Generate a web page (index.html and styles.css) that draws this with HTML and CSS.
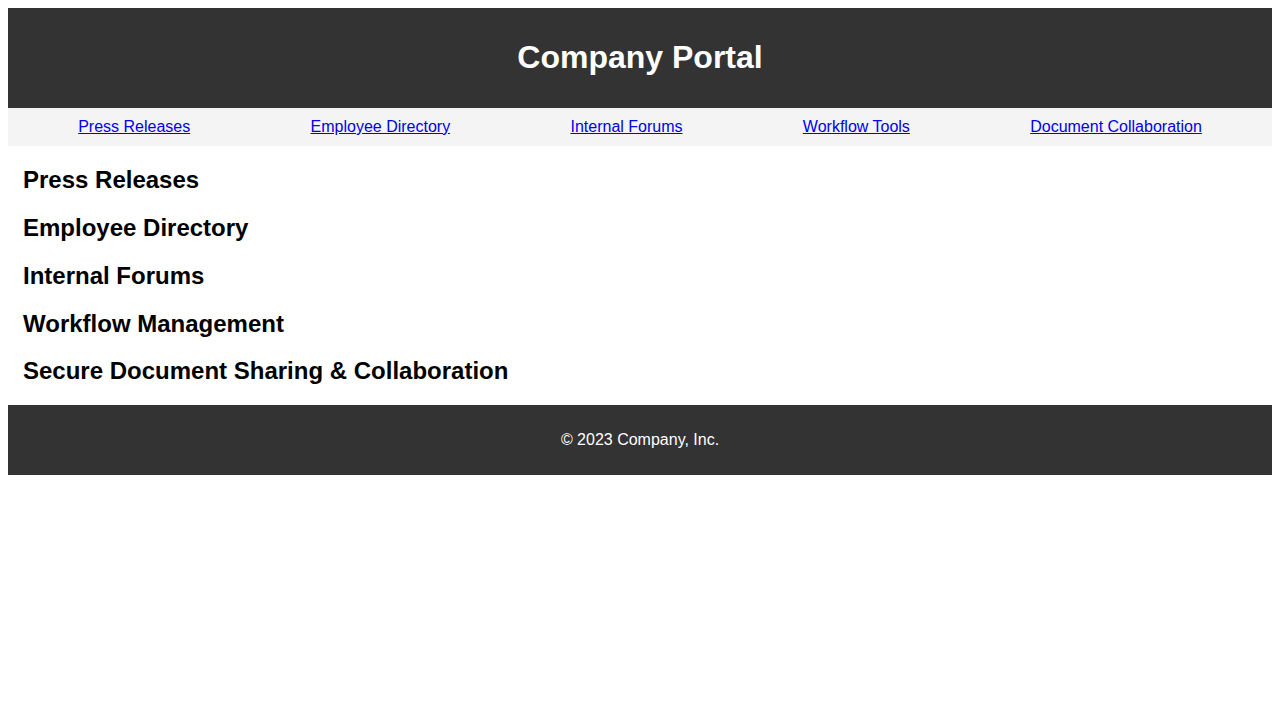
FILE: index.html
```html
<!DOCTYPE html>
<html lang="en">
<head>
<meta charset="utf-8">
<title>Company Portal</title>
<link rel="stylesheet" href="styles.css">
</head>
<body>
<header class="site-header">
  <h1 class="site-title">Company Portal</h1>
</header>
<nav class="site-nav">
  <a href="#press">Press Releases</a>
  <a href="#directory">Employee Directory</a>
  <a href="#forums">Internal Forums</a>
  <a href="#workflow">Workflow Tools</a>
  <a href="#documents">Document Collaboration</a>
</nav>
<main class="content">
  <section id="press" class="section"><h2 class="section-title">Press Releases</h2></section>
  <section id="directory" class="section"><h2 class="section-title">Employee Directory</h2></section>
  <section id="forums" class="section"><h2 class="section-title">Internal Forums</h2></section>
  <section id="workflow" class="section"><h2 class="section-title">Workflow Management</h2></section>
  <section id="documents" class="section"><h2 class="section-title">Secure Document Sharing &amp; Collaboration</h2></section>
</main>
<footer class="site-footer">
  <p class="copyright">© 2023 Company, Inc.</p>
</footer>
</body>
</html>
```
FILE: styles.css
```css
body {
  margin: 8px;
  font-family: "Liberation Sans", Arial, sans-serif;
  color: #000;
  background: #fff;
}

.site-header {
  background: #333;
  color: #fff;
  padding: 10px;
  text-align: center;
}

.site-title {
  font-size: 32px;
  margin: 21.44px 0;
}

.site-nav {
  background: #f4f4f4;
  padding: 10px;
  display: flex;
  justify-content: space-around;
}

.site-nav a {
  color: #0000ee;
  text-decoration: underline;
}

.content {
  padding: 0 15px;
}

.section-title {
  font-size: 24px;
  margin: 19.92px 0;
}

.site-footer {
  background: #333;
  color: #fff;
  padding: 10px;
  text-align: center;
}

.copyright {
  margin: 16px 0;
}
```
